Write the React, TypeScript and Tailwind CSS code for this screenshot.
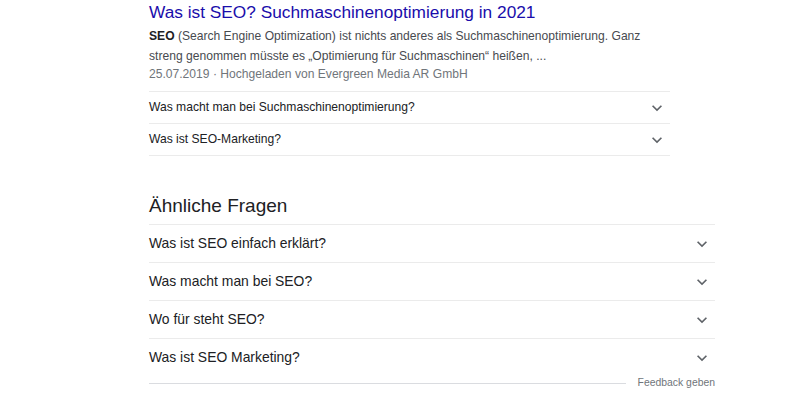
const topQuestions = [
  'Was macht man bei Suchmaschinenoptimierung?',
  'Was ist SEO-Marketing?',
];

const relatedQuestions = [
  'Was ist SEO einfach erklärt?',
  'Was macht man bei SEO?',
  'Wo für steht SEO?',
  'Was ist SEO Marketing?',
];

const Chevron = () => (
  <svg width="20" height="20" viewBox="0 0 24 24" className="shrink-0">
    <path d="M16.59 8.59L12 13.17 7.41 8.59 6 10l6 6 6-6z" fill="#5f6368" />
  </svg>
);

const App = () => {
  return (
    <div
      className="h-[400px] w-[800px] overflow-hidden bg-white pl-[149px]"
      style={{ fontFamily: '"Liberation Sans", Arial, sans-serif' }}
    >
      <div className="w-[521px]">
        <a className="block text-[17.3px] leading-[25px] text-[#1a0dab]">
          Was ist SEO? Suchmaschinenoptimierung in 2021
        </a>
        <p className="pt-[1px] text-[12.1px] leading-[20px] text-[#474a4f]">
          <b className="text-[#202124]">SEO</b> (Search Engine Optimization) ist nichts anderes als
          Suchmaschinenoptimierung. Ganz
          <br />
          streng genommen müsste es „Optimierung für Suchmaschinen“ heißen, ...
        </p>
        <div className="text-[12.1px] leading-[16px] text-[#70757a]">
          25.07.2019 · Hochgeladen von Evergreen Media AR GmbH
        </div>
        <div className="mt-[9px] border-t border-[#ebebeb]">
          {topQuestions.map((q) => (
            <div
              key={q}
              className="flex h-[32px] items-center justify-between border-b border-[#ebebeb] pr-[3px] text-[12.1px] text-[#202124]"
            >
              <span>{q}</span>
              <Chevron />
            </div>
          ))}
        </div>
      </div>

      <div className="mt-[37px] w-[566px]">
        <h2 className="text-[19px] leading-[25px] text-[#202124]">Ähnliche Fragen</h2>
        <div className="mt-[6px] border-t border-[#ebebeb]">
          {relatedQuestions.map((q, i) => (
            <div
              key={q}
              className={`flex items-center justify-between pr-[3px] text-[13.9px] text-[#202124] ${
                i < relatedQuestions.length - 1 ? 'h-[38px] border-b border-[#ebebeb]' : 'h-[37px]'
              }`}
            >
              <span>{q}</span>
              <Chevron />
            </div>
          ))}
        </div>
        <div className="mt-[1px] flex h-[12px] items-center">
          <div className="h-px flex-1 bg-[#dadce0]" />
          <span className="pl-[12px] text-[10.4px] leading-[12px] text-[#70757a]">Feedback geben</span>
        </div>
      </div>
    </div>
  );
};

export default App;
